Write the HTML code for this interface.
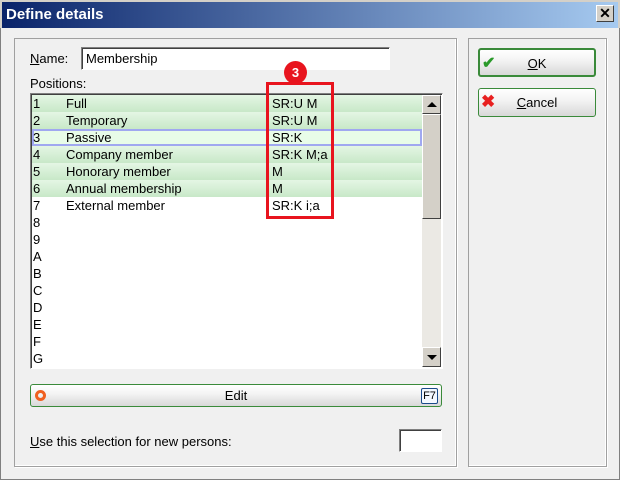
<!DOCTYPE html><html><head><style>
*{box-sizing:border-box}
body{margin:0;width:620px;height:480px;background:#f0f0f0;font-family:"Liberation Sans",sans-serif;font-size:13px;color:#000;position:relative;overflow:hidden}
.a{position:absolute}
.title{left:0;top:0;width:620px;height:28px;background:linear-gradient(90deg,#0a246a,#a6caf0);border:2px solid #d4d0c8;border-bottom:none}
.title span{position:absolute;left:4px;top:4px;color:#fff;font-weight:bold;font-size:15px}
.x{right:6px;top:5px;width:18px;height:17px;background:#d4d0c8;border:1px solid;border-color:#fff #404040 #404040 #fff;font:bold 14px "Liberation Sans";text-align:center;line-height:15px}
.grp{border:1px solid #a0a0a0;box-shadow:inset -1px -1px 0 #fff,1px 1px 0 #fff}
.inp{background:#fff;border:1px solid;border-color:#808080 #fff #fff #808080;box-shadow:inset 1px 1px 0 #404040}
.row{position:absolute;left:2px;width:390px;height:17px;line-height:17px}
.g{background:linear-gradient(#e4f6e4,#c8e8c8)}
.row b{font-weight:normal;position:absolute}
.btn{border:1px solid #3a8a3a;border-radius:3px;background:linear-gradient(#fff 0%,#f4f4f4 40%,#d8d8d8 100%);text-align:center}
.tri{position:absolute;left:4px;width:0;height:0;border-left:5px solid transparent;border-right:5px solid transparent}
</style></head><body>
<div class="a" style="left:0;top:0;width:620px;height:480px;border:1px solid #808080;border-top:none"></div>
<div class="a title"><span>Define details</span></div>
<div class="a x">✕</div>
<div class="a grp" style="left:14px;top:38px;width:443px;height:429px"></div>
<div class="a grp" style="left:468px;top:38px;width:139px;height:429px"></div>
<div class="a" style="left:30px;top:51px"><u>N</u>ame:</div>
<div class="a inp" style="left:81px;top:47px;width:309px;height:23px;padding:3px 4px">Membership</div>
<div class="a" style="left:30px;top:76px">Positions:</div>
<div class="a inp" style="left:30px;top:93px;width:413px;height:276px"></div>
<div class="a" style="left:30px;top:93px">
<div class="row g" style="top:2px"><b style="left:1px">1</b><b style="left:34px">Full</b><b style="left:240px">SR:U M</b></div>
<div class="row g" style="top:19px"><b style="left:1px">2</b><b style="left:34px">Temporary</b><b style="left:240px">SR:U M</b></div>
<div class="row" style="top:36px;background:#e8fce8;border:2px solid #a0a8f0"><b style="left:-1px;top:-2px">3</b><b style="left:32px;top:-2px">Passive</b><b style="left:238px;top:-2px">SR:K</b></div>
<div class="row g" style="top:53px"><b style="left:1px">4</b><b style="left:34px">Company member</b><b style="left:240px">SR:K M;a</b></div>
<div class="row g" style="top:70px"><b style="left:1px">5</b><b style="left:34px">Honorary member</b><b style="left:240px">M</b></div>
<div class="row g" style="top:87px"><b style="left:1px">6</b><b style="left:34px">Annual membership</b><b style="left:240px">M</b></div>
<div class="row" style="top:104px"><b style="left:1px">7</b><b style="left:34px">External member</b><b style="left:240px">SR:K i;a</b></div>
<div class="row" style="top:121px"><b style="left:1px">8</b></div>
<div class="row" style="top:138px"><b style="left:1px">9</b></div>
<div class="row" style="top:155px"><b style="left:1px">A</b></div>
<div class="row" style="top:172px"><b style="left:1px">B</b></div>
<div class="row" style="top:189px"><b style="left:1px">C</b></div>
<div class="row" style="top:206px"><b style="left:1px">D</b></div>
<div class="row" style="top:223px"><b style="left:1px">E</b></div>
<div class="row" style="top:240px"><b style="left:1px">F</b></div>
<div class="row" style="top:257px"><b style="left:1px">G</b></div>
</div>
<div class="a" style="left:422px;top:95px;width:19px;height:272px;background:#ebe9e4"></div>
<div class="a" style="left:422px;top:95px;width:19px;height:19px;background:#d4d0c8;border:1px solid;border-color:#fff #404040 #404040 #fff"><div class="tri" style="top:6px;border-bottom:5px solid #000"></div></div>
<div class="a" style="left:422px;top:114px;width:19px;height:105px;background:#d4d0c8;border:1px solid;border-color:#fff #404040 #404040 #fff"></div>
<div class="a" style="left:422px;top:347px;width:19px;height:20px;background:#d4d0c8;border:1px solid;border-color:#fff #404040 #404040 #fff"><div class="tri" style="top:7px;border-top:5px solid #000"></div></div>
<div class="a" style="left:266px;top:82px;width:68px;height:137px;border:3px solid #e8141e"></div>
<div class="a" style="left:284px;top:61px;width:23px;height:23px;border-radius:50%;background:#e8141e;color:#fff;font-weight:bold;font-size:13px;text-align:center;line-height:23px">3</div>
<div class="a btn" style="left:30px;top:384px;width:412px;height:23px;line-height:21px">Edit</div>
<div class="a" style="left:35px;top:390px;width:11px;height:11px;border-radius:50%;border:3px solid #f06020"></div>
<div class="a" style="left:421px;top:388px;width:17px;height:16px;border:1px solid #1a4a8a;border-radius:2px;font-size:11px;text-align:center;line-height:14px;background:#f4f8ff">F7</div>
<div class="a" style="left:30px;top:434px"><u>U</u>se this selection for new persons:</div>
<div class="a inp" style="left:399px;top:429px;width:43px;height:23px"></div>
<div class="a btn" style="left:478px;top:48px;width:118px;height:29px;line-height:27px;border-width:2px"><u>O</u>K</div>
<div class="a" style="left:482px;top:53px;color:#2a9a2a;font-size:16px;font-weight:bold">✔</div>
<div class="a btn" style="left:478px;top:88px;width:118px;height:29px;line-height:27px"><u>C</u>ancel</div>
<div class="a" style="left:481px;top:92px;color:#e82020;font-size:17px;font-weight:bold">✖</div>
</body></html>
